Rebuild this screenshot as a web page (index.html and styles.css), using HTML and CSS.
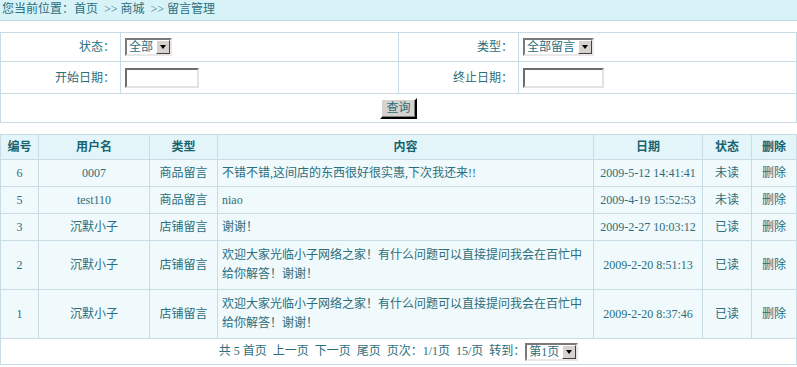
FILE: index.html
```html
<!DOCTYPE html>
<html lang="zh-CN">
  <head>
    <meta charset="UTF-8" />
    <title>留言管理</title>
    <link rel="stylesheet" href="styles.css">
  </head>
  <body>
    <div class="crumb">您当前位置：首页 &nbsp;&gt;&gt; 商城 &nbsp;&gt;&gt; 留言管理</div>

    <table class="search">
      <colgroup>
        <col class="s-label">
        <col class="s-field">
        <col class="s-label">
        <col>
      </colgroup>
      <tr>
        <td class="label">状态：</td>
        <td><span class="select"><span class="val">全部</span><span class="arrow"></span></span></td>
        <td class="label">类型：</td>
        <td><span class="select"><span class="val">全部留言</span><span class="arrow"></span></span></td>
      </tr>
      <tr class="tall">
        <td class="label">开始日期：</td>
        <td><span class="input"></span></td>
        <td class="label">终止日期：</td>
        <td><span class="input wide"></span></td>
      </tr>
      <tr>
        <td colspan="4" class="center"><span class="btn">查询</span></td>
      </tr>
    </table>

    <table class="list">
      <colgroup>
        <col class="c-id">
        <col class="c-user">
        <col class="c-type">
        <col>
        <col class="c-date">
        <col class="c-state">
        <col class="c-del">
      </colgroup>
      <tr class="head">
        <th>编号</th>
        <th>用户名</th>
        <th>类型</th>
        <th>内容</th>
        <th>日期</th>
        <th>状态</th>
        <th>删除</th>
      </tr>
      <tr>
        <td>6</td><td>0007</td><td>商品留言</td>
        <td class="text">不错不错,这间店的东西很好很实惠,下次我还来!!</td>
        <td>2009-5-12 14:41:41</td><td>未读</td><td>删除</td>
      </tr>
      <tr>
        <td>5</td><td>test110</td><td>商品留言</td>
        <td class="text">niao</td>
        <td>2009-4-19 15:52:53</td><td>未读</td><td>删除</td>
      </tr>
      <tr>
        <td>3</td><td>沉默小子</td><td>店铺留言</td>
        <td class="text">谢谢！</td>
        <td>2009-2-27 10:03:12</td><td>已读</td><td>删除</td>
      </tr>
      <tr>
        <td>2</td><td>沉默小子</td><td>店铺留言</td>
        <td class="text long">欢迎大家光临小子网络之家！有什么问题可以直接提问我会在百忙中给你解答！谢谢！</td>
        <td>2009-2-20 8:51:13</td><td>已读</td><td>删除</td>
      </tr>
      <tr>
        <td>1</td><td>沉默小子</td><td>店铺留言</td>
        <td class="text long">欢迎大家光临小子网络之家！有什么问题可以直接提问我会在百忙中给你解答！谢谢！</td>
        <td>2009-2-20 8:37:46</td><td>已读</td><td>删除</td>
      </tr>
      <tr class="pager">
        <td colspan="7">
          <span class="pages">共 5 首页&nbsp; 上一页&nbsp; 下一页&nbsp; 尾页&nbsp; 页次：1/1页&nbsp; 15/页&nbsp; 转到：</span><span class="select"><span class="val">第1页</span><span class="arrow"></span></span>
        </td>
      </tr>
    </table>
  </body>
</html>
```

FILE: styles.css
```css
body {
  margin: 0;
  padding: 0;
  font-family: "Liberation Serif", "Noto Sans CJK SC", serif;
  font-size: 12px;
  line-height: 16px;
  color: #2b6e7c;
  background: #fff;
}

.crumb {
  height: 20px;
  line-height: 18px;
  padding-left: 2px;
  background: #d8f3f8;
  border-bottom: 1px solid #c0dbe6;
  margin-bottom: 11px;
}

table {
  width: 797px;
  border-collapse: collapse;
  table-layout: fixed;
}

td, th {
  border: 1px solid #c8dce6;
  font-weight: normal;
  white-space: nowrap;
}

.search {
  margin-bottom: 11px;
}

.s-label { width: 120px; }
.s-field { width: 278px; }

.search td {
  height: 28px;
  padding: 0 4px;
}

.search .tall td {
  height: 31px;
}

.search .label {
  text-align: right;
  padding-right: 5px;
}

.center {
  text-align: center;
}

.select {
  display: inline-flex;
  align-items: center;
  height: 18px;
  box-sizing: border-box;
  border: 2px solid;
  border-color: #7a7a7a #e8e8e8 #e8e8e8 #7a7a7a;
  background: #fff;
  vertical-align: middle;
}

.select .val {
  padding: 0 3px 0 2px;
  line-height: 14px;
}

.select .arrow {
  width: 14px;
  height: 14px;
  box-sizing: border-box;
  background: #d6d3ce;
  border: 1px solid;
  border-color: #fff #404040 #404040 #fff;
  position: relative;
}

.select .arrow::after {
  content: "";
  position: absolute;
  left: 3px;
  top: 4px;
  border-left: 3px solid transparent;
  border-right: 3px solid transparent;
  border-top: 4px solid #000;
}

.input {
  display: inline-block;
  width: 74px;
  height: 20px;
  box-sizing: border-box;
  border: 2px solid;
  border-color: #6d6d6d #e2e2e2 #e2e2e2 #6d6d6d;
  background: #fff;
  vertical-align: middle;
}

.input.wide {
  width: 81px;
}

.btn {
  display: inline-block;
  padding: 0 4px;
  height: 21px;
  line-height: 17px;
  box-sizing: border-box;
  background: #d6d3ce;
  border: 2px solid;
  border-color: #fff #000 #000 #fff;
  box-shadow: inset -1px -1px 0 #808080;
  color: #2b6e7c;
  vertical-align: middle;
}

.c-id { width: 38px; }
.c-user { width: 111px; }
.c-type { width: 68px; }
.c-date { width: 109px; }
.c-state { width: 49px; }
.c-del { width: 45px; }

.list td {
  height: 26px;
  padding: 0 4px;
  text-align: center;
  background: #f0f9fb;
}

.list td.text {
  text-align: left;
  white-space: normal;
  line-height: 19px;
}

.list td.long {
  height: auto;
  padding: 5px 4px;
}

.list th {
  height: 24px;
  padding: 0;
  background: #e3f5f9;
  color: #17636f;
  font-weight: bold;
}

.list .pager td {
  background: #fff;
  height: 25px;
}

.pages {
  vertical-align: middle;
}
```
